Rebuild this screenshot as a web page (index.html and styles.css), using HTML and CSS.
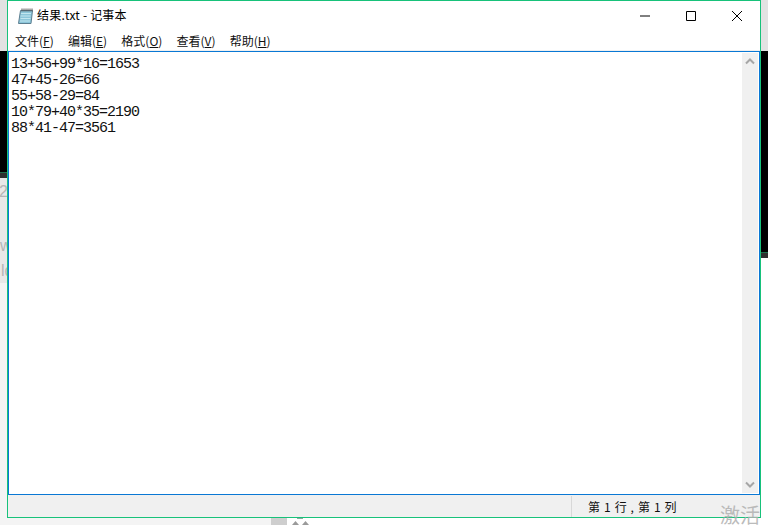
FILE: index.html
```html
<!DOCTYPE html>
<html>
	<head>
		<meta charset="utf-8" />
		<title>结果.txt - 记事本</title>
		<link rel="stylesheet" href="styles.css">
	</head>

	<body>
		<div class="desk">
			<div class="side">
				<div class="desk-top"></div>
				<div class="desk-black left-black"></div>
				<div class="desk-dark"></div>
				<div class="desk-text">
					<span class="num">2</span>
					<span class="w">w</span>
					<span class="ld">ld</span>
				</div>
			</div>
			<div class="desk-low">
				<div class="desk-block"></div>
				<svg class="desk-icon" width="20" height="7" viewBox="0 0 20 7">
					<path d="M6 0h6v1H6z" fill="#8fa8a0" />
					<path d="M4.500 3L1 7h7zM14.500 3L11 7h7z" fill="#9a9a9a" />
				</svg>
			</div>
			<div class="side side-right">
				<div class="desk-top"></div>
				<div class="desk-black right-black"></div>
				<div class="desk-dark"></div>
			</div>
		</div>

		<div class="win">
			<div class="title">
				<svg class="app-icon" width="17" height="18" viewBox="0 0 17 18">
					<path d="M3.500 3.500h12l-1.500 13H1.500z" fill="#8cc6da" stroke="#5d7f91" stroke-width="1" />
					<path d="M4 6.500h10M3.500 9h10M3.500 11.500h10M3 14h10" stroke="#c2e6ef" stroke-width="1" />
					<path d="M5 1.500v3M7 1.500v3M9 1.500v3M11 1.500v3M13 1.500v3M15 1.500v3" stroke="#555" stroke-width="1" />
				</svg>
				<span class="title-text">结果.txt - 记事本</span>
				<div class="ctrls">
					<svg width="46" height="30" viewBox="0 0 46 30"><path d="M18 15h10" stroke="#000" stroke-width="1" /></svg>
					<svg width="46" height="30" viewBox="0 0 46 30"><path d="M18.500 10.500h9v9h-9z" fill="none" stroke="#000" stroke-width="1" /></svg>
					<svg width="46" height="30" viewBox="0 0 46 30"><path d="M18 10l10 10M28 10L18 20" stroke="#000" stroke-width="1" /></svg>
				</div>
			</div>
			<div class="menu">
				<span>文件(<u>F</u>)</span>
				<span>编辑(<u>E</u>)</span>
				<span>格式(<u>O</u>)</span>
				<span>查看(<u>V</u>)</span>
				<span>帮助(<u>H</u>)</span>
			</div>
			<div class="edit">
				<pre class="txt">13+56+99*16=1653
47+45-26=66
55+58-29=84
10*79+40*35=2190
88*41-47=3561</pre>
				<div class="scroll">
					<svg width="16" height="17" viewBox="0 0 16 17"><path d="M4 10.500l4-4 4 4" fill="none" stroke="#a6a6a6" stroke-width="2" /></svg>
					<svg width="16" height="17" viewBox="0 0 16 17"><path d="M4 6.500l4 4 4-4" fill="none" stroke="#a6a6a6" stroke-width="2" /></svg>
				</div>
			</div>
			<div class="status">
				<div class="pos">第 1 行 , 第 1 列</div>
			</div>
		</div>

		<div class="mark">激活</div>
	</body>
</html>
```

FILE: styles.css
```css
html,
body {
	margin: 0;
	padding: 0;
	height: 100%;
	overflow: hidden;
	background: #f4f4f4;
	font-family: "Noto Sans CJK SC", "Liberation Sans", sans-serif;
}
.desk {
	height: 525px;
	display: flex;
}
.side {
	width: 8px;
	display: flex;
	flex-direction: column;
}
.side-right {
	width: 7px;
	background: #fff;
}
.desk-top {
	height: 51px;
	background: #e2e2e2;
}
.desk-black {
	background: #000;
}
.left-black {
	height: 121px;
}
.right-black {
	height: 201px;
}
.desk-dark {
	height: 6px;
	background: #2f2f2f;
	border-top: 1px solid #1e6b4a;
	box-sizing: border-box;
}
.desk-text {
	height: 105px;
	background: #e8e8e8;
	color: #b5b5b5;
	font-family: "Liberation Sans", sans-serif;
	font-size: 16px;
	line-height: 18px;
	overflow: hidden;
	position: relative;
}
.desk-text span {
	position: absolute;
}
.num {
	left: -1px;
	top: 5px;
}
.w {
	left: 0;
	top: 59px;
}
.ld {
	left: 1px;
	top: 84px;
}
.desk-low {
	flex: 1;
	display: flex;
	align-items: flex-end;
	padding-left: 263px;
}
.desk-block {
	width: 16px;
	height: 7px;
	background: #cecece;
}
.desk-low::after {
	content: "";
	flex: 1;
	height: 7px;
	background: #fff;
}
.desk-icon {
	background: #fff;
	padding-left: 4px;
}
.win {
	position: absolute;
	left: 7px;
	top: 0;
	width: 754px;
	height: 518px;
	box-sizing: border-box;
	border: 1px solid #17c27a;
	background: #fff;
	display: flex;
	flex-direction: column;
}
.title {
	height: 29px;
	display: flex;
	align-items: center;
	padding-left: 9px;
	font-size: 12px;
	color: #000;
}
.app-icon {
	margin-right: 3px;
}
.title-text {
	flex: 1;
	letter-spacing: 0.2px;
	margin-bottom: 2px;
}
.ctrls {
	display: flex;
}
.menu {
	height: 21px;
	box-sizing: border-box;
	border-bottom: 1px solid #f0f0f0;
	display: flex;
	gap: 14.2px;
	padding-left: 7px;
	align-items: center;
	font-size: 12px;
	color: #111;
}
.edit {
	flex: 1;
	display: flex;
	border: 1px solid #0a78d4;
	min-height: 0;
	padding: 1px 1px 1px 0;
}
.txt {
	flex: 1;
	margin: 0;
	padding: 4px 0 0 2px;
	font-family: "Liberation Mono", monospace;
	font-size: 15px;
	letter-spacing: -1px;
	line-height: 16px;
	color: #111;
}
.scroll {
	width: 16px;
	background: #f0f0f0;
	display: flex;
	flex-direction: column;
	justify-content: space-between;
}
.status {
	height: 22px;
	background: #f0f0f0;
	display: flex;
	justify-content: flex-end;
	font-size: 12px;
	color: #111;
}
.pos {
	width: 189px;
	box-sizing: border-box;
	border-left: 1px solid #d8d8d8;
	padding-left: 16px;
	line-height: 22px;
	margin-top: 1px;
	word-spacing: 1.3px;
}
.mark {
	position: absolute;
	left: 720px;
	top: 503px;
	font-size: 20px;
	line-height: 24px;
	color: #b0b0b0;
	opacity: 0.85;
	white-space: nowrap;
}
```
